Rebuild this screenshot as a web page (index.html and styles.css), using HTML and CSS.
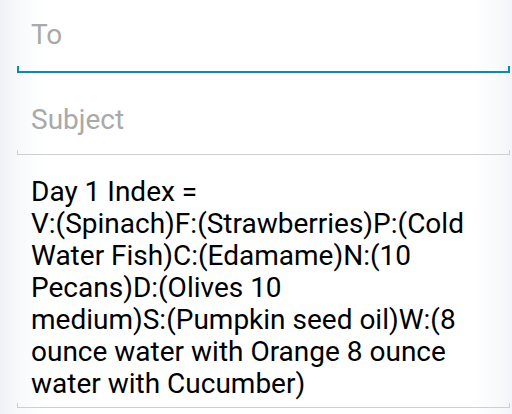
FILE: index.html
```html
<!DOCTYPE html>
<html>
<head>
<meta charset="utf-8">
<link rel="stylesheet" href="styles.css">
</head>
<body>
<div class="screen">
  <div class="field field-to">
    <div class="text placeholder">To</div>
    <div class="line line-active"></div>
  </div>
  <div class="field field-subject">
    <div class="text placeholder">Subject</div>
    <div class="line"></div>
  </div>
  <div class="field field-body">
    <div class="text body-text">Day 1 Index =<br>V:(Spinach)F:(Strawberries)P:(Cold<br>Water Fish)C:(Edamame)N:(10<br>Pecans)D:(Olives 10<br>medium)S:(Pumpkin seed oil)W:(8<br>ounce water with Orange 8 ounce<br>water with Cucumber)</div>
    <div class="line"></div>
  </div>
</div>
</body>
</html>
```

FILE: styles.css
```css
html, body {
  margin: 0;
  padding: 0;
}
body {
  width: 512px;
  height: 414px;
  overflow: hidden;
  font-family: Roboto, "Noto Sans", sans-serif;
  background: #ffffff;
}
.screen {
  height: 414px;
  background:
    linear-gradient(to right, #eef2f7 0px, #f7f9fb 18px, rgba(255,255,255,0) 45px),
    linear-gradient(to left, #f1f4f8 0px, #f8f9fb 12px, rgba(255,255,255,0) 40px),
    #ffffff;
  display: flex;
  flex-direction: column;
}
.field {
  margin: 0 2px 0 17px;
  display: flex;
  flex-direction: column;
}
.text {
  padding-left: 14px;
  font-size: 28px;
  line-height: 32px;
}
.placeholder {
  color: #a9a9a9;
}
.field-to .text {
  padding-top: 19px;
  height: 47px;
}
.field-subject .text {
  padding-top: 31px;
  height: 46px;
}
.body-text {
  padding-top: 21px;
  color: #000000;
  white-space: nowrap;
}
.line {
  height: 4px;
  border: 1px solid #cfcfcf;
  border-top: none;
}
.field-body .line {
  margin-top: 3px;
}
.line-active {
  height: 5px;
  border-width: 2px;
  border-color: #0a88b8;
}
```
